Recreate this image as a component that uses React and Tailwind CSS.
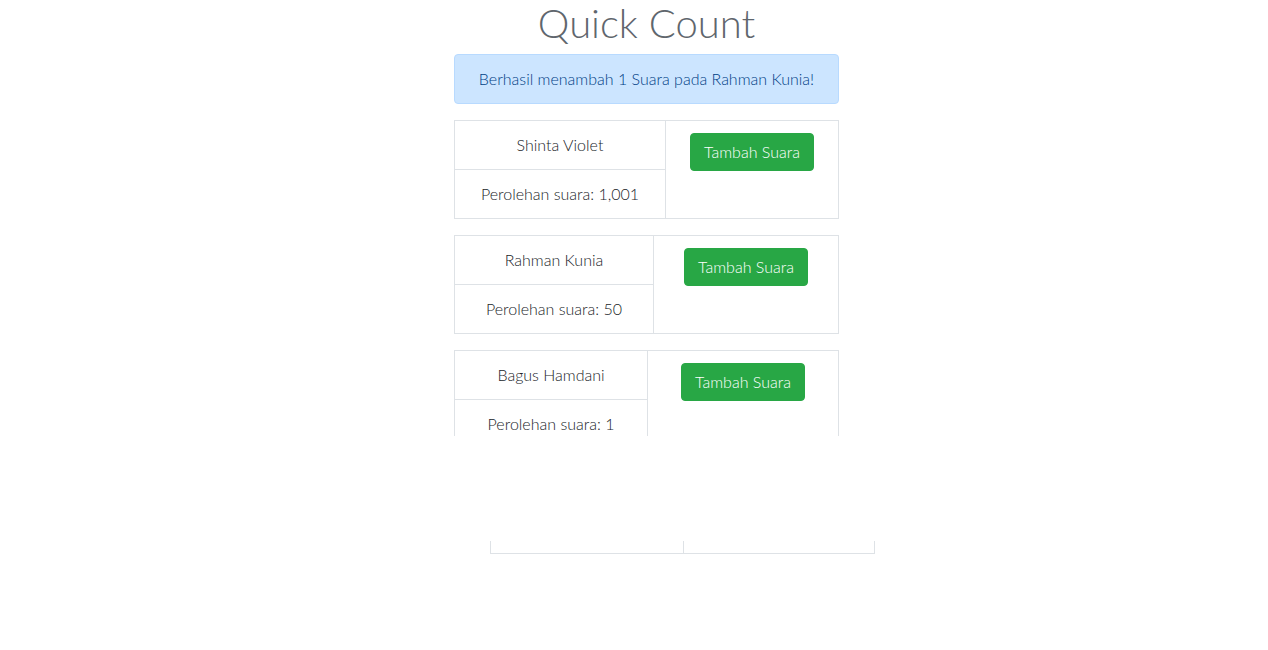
const candidates = [
  { id: 1, name: "Shinta Violet", votes: "1,001", leftWidth: "w-[211px]" },
  { id: 2, name: "Rahman Kunia", votes: "50", leftWidth: "w-[199px]" },
  { id: 3, name: "Bagus Hamdani", votes: "1", leftWidth: "w-[193px]" },
];

const CandidateTable = ({ candidate }) => {
  return (
    <table className="w-full border-collapse mb-4">
      <tbody>
        <tr>
          <td
            className={`${candidate.leftWidth} border border-[#dee2e6] p-3 text-center leading-6 align-top`}
          >
            {candidate.name}
          </td>
          <td rowSpan={2} className="border border-[#dee2e6] p-3 text-center align-top">
            <button className="inline-block bg-[#28a745] text-white border border-[#28a745] rounded-[4px] px-[13px] py-[6px] leading-6 font-light">
              Tambah Suara
            </button>
          </td>
        </tr>
        <tr>
          <td className="border border-[#dee2e6] p-3 text-center leading-6 align-top">
            Perolehan suara: {candidate.votes}
          </td>
        </tr>
      </tbody>
    </table>
  );
};

const App = () => {
  return (
    <div className="min-h-[650px] bg-white text-[#212529] text-base font-light font-['Lato','Open_Sans',sans-serif]">
      {/* Main content, clipped */}
      <div className="h-[436px] overflow-hidden">
        <div className="ml-[454px] w-[385px]">
          <h1 className="text-[40px] leading-[44px] pt-[1px] text-center text-[#5f666d] font-light mb-[9px]">
            Quick Count
          </h1>
          <div className="bg-[#cce5ff] border border-[#b8daff] text-[#004085] rounded-[4px] px-5 py-3 leading-6 text-center mb-4">
            Berhasil menambah 1 Suara pada Rahman Kunia!
          </div>
          {candidates.map((c) => (
            <CandidateTable key={c.id} candidate={c} />
          ))}
        </div>
      </div>

      {/* Leftover table fragment */}
      <div className="mt-[105px] ml-[490px] w-[385px] h-[13px] flex border-x border-b border-[#dee2e6]">
        <div className="w-[193px] h-full border-r border-[#dee2e6]"></div>
        <div className="flex-1"></div>
      </div>
    </div>
  );
};

export default App;
